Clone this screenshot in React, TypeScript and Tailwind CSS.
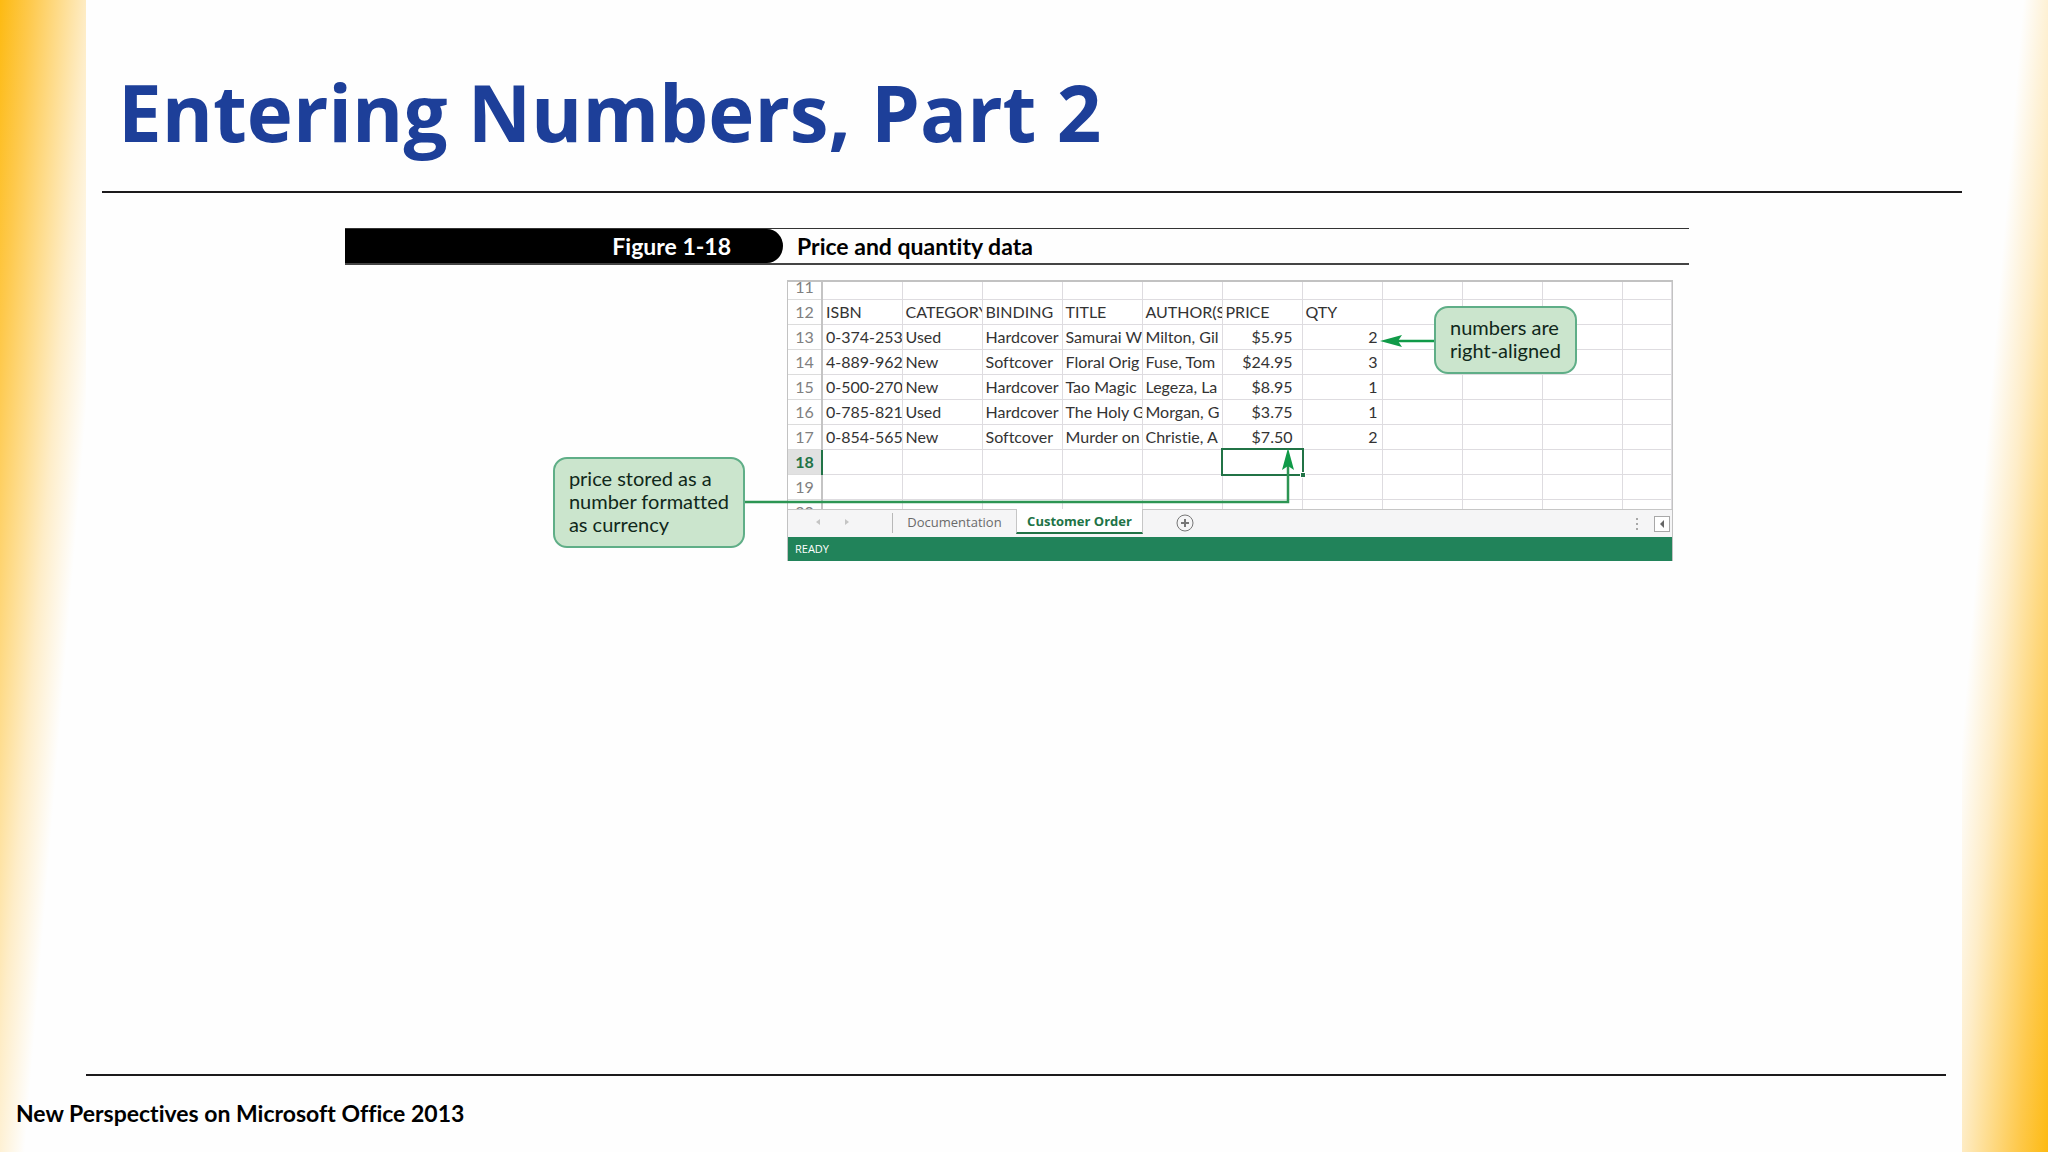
import type { ReactNode } from "react";

const columns = ["isbn", "category", "binding", "title", "author", "price", "qty", "h", "i", "j"];

type Row = { n: number; cells: string[] };

const rows: Row[] = [
  { n: 12, cells: ["ISBN", "CATEGORY", "BINDING", "TITLE", "AUTHOR(S", "PRICE", "QTY"] },
  { n: 13, cells: ["0-374-253", "Used", "Hardcover", "Samurai W", "Milton, Gil", "$5.95", "2"] },
  { n: 14, cells: ["4-889-962", "New", "Softcover", "Floral Orig", "Fuse, Tom", "$24.95", "3"] },
  { n: 15, cells: ["0-500-270", "New", "Hardcover", "Tao Magic", "Legeza, La", "$8.95", "1"] },
  { n: 16, cells: ["0-785-821", "Used", "Hardcover", "The Holy G", "Morgan, G", "$3.75", "1"] },
  { n: 17, cells: ["0-854-565", "New", "Softcover", "Murder on", "Christie, A", "$7.50", "2"] },
  { n: 18, cells: [] },
  { n: 19, cells: [] },
];

function cellClass(row: Row, col: number) {
  const numeric = row.n > 12 && col >= 5;
  if (!numeric) return "overflow-hidden whitespace-nowrap pl-[3px]";
  return col === 5
    ? "overflow-hidden whitespace-nowrap pr-[9px] text-right"
    : "overflow-hidden whitespace-nowrap pr-[4px] text-right";
}

function Callout({ children }: { children: ReactNode }) {
  return (
    <p className="rounded-[14px] border-2 border-[#5fae87] bg-[#cbe5cd] px-[14px] pt-2 pb-[10px] text-[20px] leading-[23px] whitespace-nowrap text-[#10281a]">
      {children}
    </p>
  );
}

function Sheet() {
  return (
    <table className="w-full table-fixed border-collapse text-[16px] leading-6 text-[#333]">
      <colgroup>
        <col className="w-[34px]" />
        {columns.map((c) => (
          <col key={c} className="w-[80px]" />
        ))}
        <col />
      </colgroup>
      <tbody>
        <tr>
          <th scope="row" className="border-r-2 border-b border-[#dcdcdc] border-r-[#c4c4c4] p-0 font-normal text-[#808080]">
            <div className="flex h-[17px] items-end justify-center overflow-hidden">11</div>
          </th>
          {[...columns, "k"].map((c) => (
            <td key={c} className="border-r border-b border-[#dedce0] p-0" />
          ))}
        </tr>
        {rows.map((row) => (
          <tr key={row.n}>
            <th
              scope="row"
              className={
                row.n === 18
                  ? "h-[25px] border-r-2 border-b border-[#dcdcdc] border-r-[#217346] bg-[#e1e1e1] p-0 font-bold text-[#217346]"
                  : "h-[25px] border-r-2 border-b border-[#dcdcdc] border-r-[#c4c4c4] p-0 font-normal text-[#808080]"
              }
            >
              {row.n}
            </th>
            {[...columns, "k"].map((c, i) => (
              <td key={c} className="relative h-[25px] border-r border-b border-[#dedce0] p-0">
                <div className={cellClass(row, i)}>{row.cells[i]}</div>
                {row.n === 18 && c === "price" && (
                  <span className="absolute -inset-[2px] border-2 border-[#217346]">
                    <span className="absolute -right-1 -bottom-1 size-[6px] border border-white bg-[#217346]" />
                  </span>
                )}
              </td>
            ))}
          </tr>
        ))}
        <tr>
          <th scope="row" className="border-r-2 border-[#c4c4c4] p-0 font-normal text-[#808080]">
            <div className="h-[9px] overflow-hidden">20</div>
          </th>
          {[...columns, "k"].map((c) => (
            <td key={c} className="border-r border-[#dedce0] p-0" />
          ))}
        </tr>
      </tbody>
    </table>
  );
}

function TabBar() {
  return (
    <div className="flex h-[28px] items-stretch border-t border-[#c6c6c6] bg-[#f5f5f6] font-['Open_Sans',sans-serif] text-[13px] leading-6 text-[#6a6a6a]">
      <button type="button" aria-label="Previous sheet" className="ml-[26px] flex w-2 items-center justify-center pb-1">
        <svg width="4" height="6" viewBox="0 0 4 6" fill="#c4c4c4"><path d="M4 0v6L0 3z" /></svg>
      </button>
      <button type="button" aria-label="Next sheet" className="ml-[21px] flex w-2 items-center justify-center pb-1">
        <svg width="4" height="6" viewBox="0 0 4 6" fill="#c4c4c4"><path d="M0 0v6l4-3z" /></svg>
      </button>
      <span className="mt-[3px] mb-1 ml-[41px] border-l border-[#b8b8b8]" />
      <button type="button" className="w-[123px] pb-1 text-center">Documentation</button>
      <button type="button" className="-mt-px mb-[3px] w-[127px] border-x border-b-2 border-[#c6c6c6] border-b-[#217346] bg-white text-center font-bold text-[#217346]">
        Customer Order
      </button>
      <button type="button" aria-label="New sheet" className="ml-[33px] flex items-center pb-px">
        <svg width="18" height="18" viewBox="0 0 18 18" fill="none" stroke="#777">
          <circle cx="9" cy="9" r="8" />
          <path d="M9 5v8M5 9h8" strokeWidth="2" />
        </svg>
      </button>
      <svg className="mt-2 ml-auto" width="3" height="12" viewBox="0 0 3 12" fill="#a8a8a8">
        <path d="M0 0h2v2H0zM0 5h2v2H0zM0 10h2v2H0z" />
      </svg>
      <button type="button" aria-label="Scroll left" className="mt-[6px] mr-[2px] ml-[15px] flex size-4 items-center justify-center border border-[#a8a8a8] bg-white">
        <svg width="4" height="8" viewBox="0 0 4 8" fill="#666"><path d="M4 0v8L0 4z" /></svg>
      </button>
    </div>
  );
}

export default function App() {
  return (
    <div className="relative flex min-h-screen flex-col bg-[#fefefe] font-[Lato,sans-serif] [font-variant-ligatures:none]">
      <div className="absolute inset-y-0 left-0 w-[86px] bg-[linear-gradient(94.75deg,#fdba12_0px,#fec94c_30px,#fedd90_62px,#feedc8_88px,#fefefe_120px)]" />
      <div className="absolute inset-y-0 right-0 w-[86px] bg-[linear-gradient(274.75deg,#fdba12_0px,#fec94c_30px,#fedd90_62px,#feedc8_88px,#fefefe_120px)]" />

      <header className="relative mr-[86px] ml-[102px] h-[193px] border-b-2 border-[#1c1a1c] pt-[64px] pl-4">
        <h1 className="font-['Open_Sans',sans-serif] text-[78px] leading-[96px] font-bold whitespace-nowrap text-[#1d3f99]">
          Entering Numbers, Part 2
        </h1>
      </header>

      <main className="relative mr-[100px] ml-[86px] flex-1">
        <figure className="mx-auto mt-[35px] max-w-[1344px]">
          <figcaption className="flex h-[37px] border-t border-b-2 border-t-[#333] border-b-[#444] text-[23px] leading-[34px] font-bold">
            <span className="w-[438px] bg-black pr-[52px] text-right text-white [border-radius:0_16px_16px_0/0_17px_17px_0]">Figure 1-18</span>
            <span className="ml-[14px] text-black">Price and quantity data</span>
          </figcaption>
          <div className="mt-[15px] flex items-start">
            <div className="flex w-[442px] justify-end pt-[177px] pr-[42px]">
              <Callout>
                price stored as a<br />number formatted<br />as currency
              </Callout>
            </div>
            <div className="relative mr-4 min-w-0 flex-1 border border-t-2 border-b-0 border-[#c2c2c2] bg-white">
              <Sheet />
              <TabBar />
              <div className="h-6 bg-[#21835a] pl-[7px] font-['Open_Sans',sans-serif] text-[11px] leading-6 text-white">READY</div>
              <svg className="absolute -top-[2px] -left-px overflow-visible" width="660" height="240" viewBox="0 0 660 240" fill="none">
                <path d="M-42 222H501V180" stroke="#2c9553" strokeWidth="2.5" />
                <path d="M501 168l6 22-6-4-6 4z" fill="#109a48" />
                <path d="M648 61H608" stroke="#109a48" strokeWidth="2.5" />
                <path d="M593 61l22-6-4 6 4 6z" fill="#109a48" />
              </svg>
              <div className="absolute top-[24px] left-[646px]">
                <Callout>
                  numbers are<br />right-aligned
                </Callout>
              </div>
            </div>
          </div>
        </figure>
      </main>

      <footer className="relative">
        <div className="mr-[102px] ml-[86px] border-t-2 border-[#1c1a1c]" />
        <p className="h-[76px] pt-[21px] pl-4 text-[23px] leading-8 font-bold text-black">
          New Perspectives on Microsoft Office 2013
        </p>
      </footer>
    </div>
  );
}
